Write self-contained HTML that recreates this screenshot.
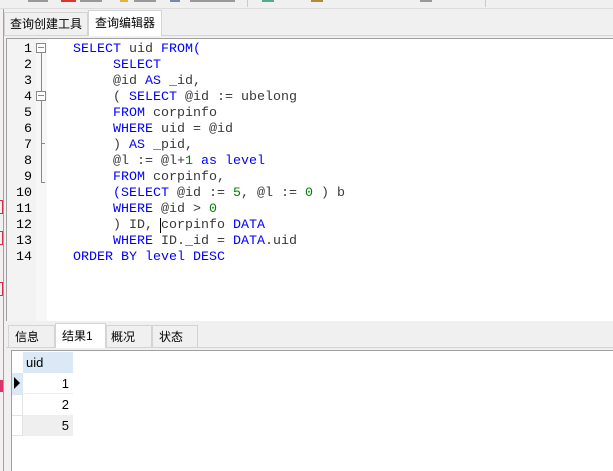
<!DOCTYPE html>
<html><head><meta charset="utf-8"><style>
*{margin:0;padding:0;box-sizing:border-box}
body{width:613px;height:471px;overflow:hidden;background:#f0f0f0;position:relative;font-family:"Liberation Sans","Noto Sans CJK SC",sans-serif;}
.abs{position:absolute}
.code{font-family:"Liberation Mono","DejaVu Sans Mono",monospace;font-size:13.33px;line-height:16px;white-space:pre;color:#3a3a3a}
.k{color:#0000ff}.n{color:#008000}
.ln{position:absolute;left:8px;width:24px;text-align:right;font-family:"Liberation Mono",monospace;font-size:13.33px;line-height:16px;color:#000}
.tab{position:absolute;font-size:12px;color:#000;border:1px solid #d4d4d4;border-bottom:none;background:#f0f0f0;padding-left:6px}
.tb{position:absolute;top:0;height:2px;background:#999}
</style></head><body>
<div class="abs" style="left:0;top:0;width:3px;height:471px;background:#f4f0f2"></div>
<div class="abs" style="left:3px;top:0;width:1px;height:471px;background:#a0a0a0"></div>
<div class="abs" style="left:0;top:200px;width:3px;height:14px;border:1px solid #d03050;border-left:none"></div>
<div class="abs" style="left:0;top:231px;width:3px;height:14px;border:1px solid #d03050;border-left:none"></div>
<div class="abs" style="left:0;top:282px;width:3px;height:14px;border:1px solid #d03050;border-left:none"></div>
<div class="abs" style="left:0;top:380px;width:3px;height:12px;background:#d36"></div>
<!-- toolbar fragments -->
<div class="abs" style="left:0;top:0;width:613px;height:9px;background:#f0f0f0;border-bottom:1px solid #dcdcdc"></div>
<div class="abs" style="left:61px;top:0;width:15px;height:2px;background:#d33"></div>
<div class="tb" style="left:28px;width:20px"></div>
<div class="tb" style="left:80px;width:22px"></div>
<div class="abs" style="left:120px;top:0;width:8px;height:2px;background:#e8b040"></div>
<div class="tb" style="left:134px;width:22px"></div>
<div class="abs" style="left:170px;top:0;width:10px;height:2px;background:#78a"></div>
<div class="tb" style="left:190px;width:45px"></div>
<div class="abs" style="left:247px;top:0;width:1px;height:7px;background:#ccc"></div>
<div class="abs" style="left:262px;top:0;width:12px;height:2px;background:#5a8"></div>
<div class="abs" style="left:311px;top:0;width:12px;height:2px;background:#b08a40"></div>
<div class="tb" style="left:420px;width:12px"></div>
<div class="abs" style="left:485px;top:0;width:1px;height:7px;background:#ccc"></div>
<!-- top tabs -->
<div class="abs" style="left:4px;top:35px;width:609px;height:1px;background:#d4d4d4"></div>
<div class="tab" style="left:4px;top:12px;width:84px;height:23px;line-height:22px;padding-left:5px">查询创建工具</div>
<div class="tab" style="left:88px;top:10px;width:74px;height:26px;line-height:24px;background:#fff">查询编辑器</div>
<!-- editor -->
<div class="abs" style="left:6px;top:38px;width:607px;height:283px;background:#fff;border-top:1px solid #a0a0a0;border-left:1px solid #a0a0a0"></div>
<div class="abs" style="left:7px;top:39px;width:29px;height:282px;background:#f3f3f3"></div>
<div class="abs" style="left:36px;top:39px;width:11px;height:282px;background:#f7f7f7"></div>
<div class="abs" style="left:36px;top:43px;width:10px;height:10px;border:1px solid #888;background:#fff"></div>
<div class="abs" style="left:38px;top:47px;width:6px;height:1px;background:#888"></div>
<div class="abs" style="left:36px;top:91px;width:10px;height:10px;border:1px solid #888;background:#fff"></div>
<div class="abs" style="left:38px;top:95px;width:6px;height:1px;background:#888"></div>
<div class="abs" style="left:41px;top:53px;width:1px;height:38px;background:#888"></div>
<div class="abs" style="left:41px;top:101px;width:1px;height:82px;background:#888"></div>
<div class="abs" style="left:41px;top:143px;width:4px;height:1px;background:#888"></div>
<div class="abs" style="left:41px;top:182px;width:4px;height:1px;background:#888"></div>
<div class="ln" style="top:42px">1<br>2<br>3<br>4<br>5<br>6<br>7<br>8<br>9<br>10<br>11<br>12<br>13<br>14</div>
<div class="abs code" style="left:73px;top:42px"><span class="k">SELECT</span> uid <span class="k">FROM(</span>
     <span class="k">SELECT</span>
     @id <span class="k">AS</span> _id,
     ( <span class="k">SELECT</span> @id := ubelong
     <span class="k">FROM</span> corpinfo
     <span class="k">WHERE</span> uid = @id
     ) <span class="k">AS</span> _pid,
     @l := @l+<span class="n">1</span> <span class="k">as level</span>
     <span class="k">FROM</span> corpinfo,
     <span class="k">(SELECT</span> @id := <span class="n">5</span>, @l := <span class="n">0</span> ) b
     <span class="k">WHERE</span> @id &gt; <span class="n">0</span>
     ) ID, corpinfo <span class="k">DATA</span>
     <span class="k">WHERE</span> ID._id = <span class="k">DATA</span>.uid
<span class="k">ORDER BY level DESC</span></div>
<div class="abs" style="left:160px;top:218px;width:1px;height:15px;background:#000"></div>
<!-- result tabs -->
<div class="abs" style="left:6px;top:347px;width:607px;height:1px;background:#d4d4d4"></div>
<div class="tab" style="left:8px;top:325px;width:47px;height:22px;line-height:23px">信息</div>
<div class="tab" style="left:55px;top:323px;width:51px;height:25px;line-height:24px;background:#fff">结果1</div>
<div class="tab" style="left:106px;top:325px;width:46px;height:22px;line-height:23px;padding-left:4px">概况</div>
<div class="tab" style="left:152px;top:325px;width:46px;height:22px;line-height:23px">状态</div>
<!-- grid -->
<div class="abs" style="left:11px;top:350px;width:602px;height:121px;background:#fff;border-top:1px solid #a0a0a0;border-left:1px solid #a0a0a0"></div>
<div class="abs" style="left:23px;top:352px;width:50px;height:21px;background:#dbe9f7;font-size:13px;line-height:22px;padding-left:3px;color:#000">uid</div>
<div class="abs" style="left:12px;top:373px;width:11px;height:21px;background:#dbe9f7"></div>
<div class="abs" style="left:14px;top:377px;width:0;height:0;border-left:6px solid #000;border-top:6px solid transparent;border-bottom:6px solid transparent"></div>
<div class="abs" style="left:12px;top:394px;width:11px;height:42px;border-top:1px solid #e4e4e4;border-bottom:1px solid #e4e4e4;border-right:1px solid #e4e4e4"></div>
<div class="abs" style="left:12px;top:415px;width:11px;height:1px;background:#e4e4e4"></div>
<div class="abs" style="left:23px;top:373px;width:50px;height:21px;font-size:13px;line-height:22px;text-align:right;padding-right:4px;border-bottom:1px solid #eee">1</div>
<div class="abs" style="left:23px;top:394px;width:50px;height:21px;font-size:13px;line-height:22px;text-align:right;padding-right:4px">2</div>
<div class="abs" style="left:23px;top:415px;width:50px;height:21px;font-size:13px;line-height:22px;text-align:right;padding-right:4px;background:#efefef">5</div>
</body></html>
